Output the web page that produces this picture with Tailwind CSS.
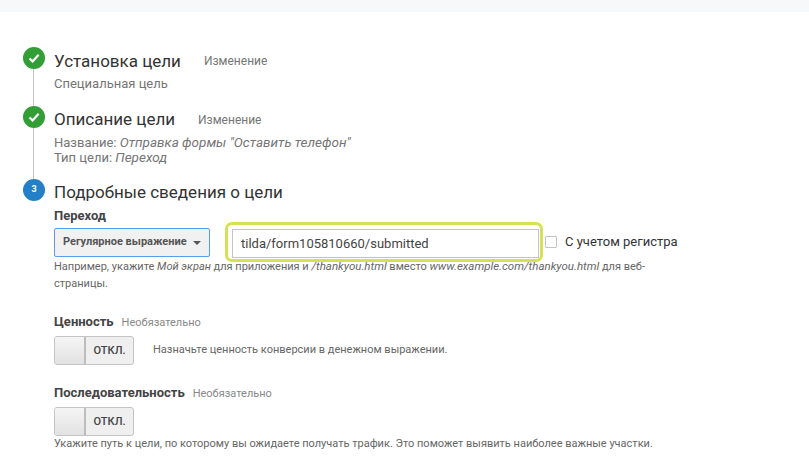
<!DOCTYPE html>
<html lang="ru">
<head>
    <meta charset="UTF-8">
    <meta name="viewport" content="width=device-width, initial-scale=1.0">
    <title>Цель</title>
    <script src="https://cdn.jsdelivr.net/npm/@tailwindcss/browser@4"></script>
</head>
<body class="bg-white font-['Roboto',sans-serif] overflow-hidden">
    <div class="h-[472px] overflow-hidden">
        <!-- Top strip -->
        <div class="h-3 bg-[#f7f8fa]"></div>

        <div class="pt-[35px] pl-[23px]">
            <!-- Step 1 -->
            <div class="flex h-[59px]">
                <div class="w-[22px] flex flex-col shrink-0">
                    <div class="w-[22px] h-[22px] rounded-full bg-[#339e36] flex items-center justify-center shrink-0">
                        <svg width="14" height="14" viewBox="0 0 14 14" fill="none"><path d="M2.5 7.5 L5.6 10.4 L11.6 3.8" stroke="#fff" stroke-width="2.2"/></svg>
                    </div>
                    <div class="w-px ml-[10px] flex-1 bg-[#c4c4c4]"></div>
                </div>
                <div class="ml-[9px]">
                    <div class="flex items-center h-[28px]">
                        <span class="text-[17px] leading-[28px] text-[#333]">Установка цели</span>
                        <span class="ml-[23px] text-[12px] text-[#757575]">Изменение</span>
                    </div>
                    <p class="text-[13px] leading-[16px] text-[#757575] mt-[1px]">Специальная цель</p>
                </div>
            </div>

            <!-- Step 2 -->
            <div class="flex h-[73px]">
                <div class="w-[22px] flex flex-col shrink-0">
                    <div class="w-[22px] h-[22px] rounded-full bg-[#339e36] flex items-center justify-center shrink-0">
                        <svg width="14" height="14" viewBox="0 0 14 14" fill="none"><path d="M2.5 7.5 L5.6 10.4 L11.6 3.8" stroke="#fff" stroke-width="2.2"/></svg>
                    </div>
                    <div class="w-px ml-[10px] flex-1 bg-[#c4c4c4]"></div>
                </div>
                <div class="ml-[9px]">
                    <div class="flex items-center h-[27px]">
                        <span class="text-[17px] leading-[27px] text-[#333]">Описание цели</span>
                        <span class="ml-[23px] text-[12px] text-[#757575]">Изменение</span>
                    </div>
                    <p class="text-[13px] leading-[14px] text-[#757575] mt-[2px]">Название: <i class="text-[13.5px]">Отправка формы "Оставить телефон"</i></p>
                    <p class="text-[13px] leading-[14px] text-[#757575]">Тип цели: <i class="text-[13.5px]">Переход</i></p>
                </div>
            </div>

            <!-- Step 3 -->
            <div class="flex">
                <div class="w-[22px] shrink-0">
                    <div class="w-[22px] h-[22px] rounded-full bg-[#2380c8] flex items-center justify-center text-white text-[9px] font-bold">3</div>
                </div>
                <div class="ml-[9px]">
                    <div class="text-[17px] leading-[26px] text-[#333]">Подробные сведения о цели</div>
                    <div class="text-[13px] leading-[16px] font-bold text-[#444] mt-[3px]">Переход</div>

                    <div class="flex items-center -mt-[2px] h-[40px]">
                        <div class="w-[156px] h-[29px] mt-[1px] border border-[#5b9bf0] rounded-[2px] bg-[#f1f1f1] flex items-center pl-[8px] text-[11px] font-bold text-[#555]">
                            Регулярное выражение
                            <span class="ml-[6px] w-0 h-0 border-x-[4px] border-x-transparent border-t-[4px] border-t-[#555]"></span>
                        </div>
                        <div class="ml-[15px] w-[318px] h-[40px] border-[3px] border-[#d4e157] rounded-[7px] pt-[4px] pl-[4px] pr-[1px] pb-[1px] flex">
                            <input type="text" value="tilda/form105810660/submitted" class="w-full h-[29px] border border-[#c4c4c4] pl-[8px] text-[13px] text-[#444] outline-none">
                        </div>
                        <span class="ml-[2px] w-[12px] h-[12px] border border-[#c4c4c4] rounded-[1px] bg-white"></span>
                        <span class="ml-[8px] text-[13px] text-[#333] whitespace-nowrap">С учетом регистра</span>
                    </div>

                    <p class="w-[600px] -mt-[4px] text-[11px] leading-[17px] text-[#666]">Например, укажите <i>Мой экран</i> для приложения и <i class="text-[11.5px]">/thankyou.html</i> вместо <i class="text-[11.5px]">www.example.com/thankyou.html</i> для веб-страницы.</p>

                    <div class="flex items-baseline mt-[22px] leading-[16px]">
                        <span class="text-[13px] font-bold text-[#444]">Ценность</span>
                        <span class="ml-2 text-[11px] text-[#888]">Необязательно</span>
                    </div>
                    <div class="flex items-center mt-[5px]">
                        <div class="w-[80px] h-[29px] rounded-[3px] border border-[#c4c4c4] bg-[#efefef] flex overflow-hidden">
                            <div class="w-[31px] bg-gradient-to-b from-[#f5f5f5] to-[#e2e2e2] border-r-2 border-[#bdbdbd]"></div>
                            <div class="flex-1 text-center text-[11px] leading-[27px] font-medium text-[#444]">ОТКЛ.</div>
                        </div>
                        <span class="ml-[19px] text-[11px] text-[#666]">Назначьте ценность конверсии в денежном выражении.</span>
                    </div>

                    <div class="flex items-baseline mt-[20px] leading-[16px]">
                        <span class="text-[13px] font-bold text-[#444]">Последовательность</span>
                        <span class="ml-2 text-[11px] text-[#888]">Необязательно</span>
                    </div>
                    <div class="w-[80px] h-[29px] mt-[5px] rounded-[3px] border border-[#c4c4c4] bg-[#efefef] flex overflow-hidden">
                        <div class="w-[31px] bg-gradient-to-b from-[#f5f5f5] to-[#e2e2e2] border-r-2 border-[#bdbdbd]"></div>
                        <div class="flex-1 text-center text-[11px] leading-[27px] font-medium text-[#444]">ОТКЛ.</div>
                    </div>
                    <p class="text-[11px] leading-[16px] text-[#666] whitespace-nowrap">Укажите путь к цели, по которому вы ожидаете получать трафик. Это поможет выявить наиболее важные участки.</p>
                </div>
            </div>
        </div>
    </div>
</body>
</html>
